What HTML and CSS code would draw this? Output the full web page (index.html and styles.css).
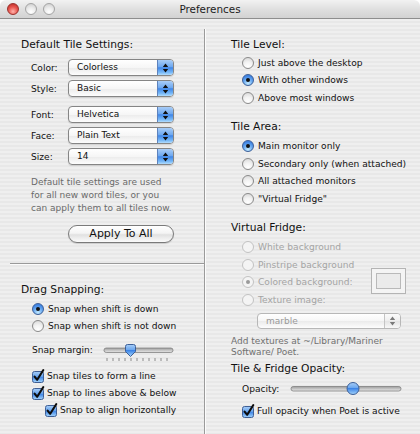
FILE: index.html
```html
<!DOCTYPE html>
<html lang="en">
<head>
    <meta charset="UTF-8">
    <title>Preferences</title>
    <link rel="stylesheet" href="styles.css">
</head>
<body>
    <!-- shared drawings: aqua gradient, check mark, popup arrows -->
    <svg class="sprite" width="0" height="0">
        <defs>
            <linearGradient id="aqua" x1="0" y1="0" x2="0" y2="1">
                <stop offset="0" stop-color="#a7cdf7"/>
                <stop offset="0.45" stop-color="#6aa6ee"/>
                <stop offset="0.5" stop-color="#3d84e6"/>
                <stop offset="1" stop-color="#a6d6fc"/>
            </linearGradient>
            <linearGradient id="track" x1="0" y1="0" x2="0" y2="1">
                <stop offset="0" stop-color="#9d9d9d"/>
                <stop offset="1" stop-color="#e9e9e9"/>
            </linearGradient>
            <symbol id="check" viewBox="0 0 14 14">
                <rect x="1.5" y="2.5" width="11" height="11" rx="2" fill="url(#aqua)" stroke="#3f5f95"/>
                <path d="M3.6 7.6 L6.2 10.8 L12.2 1.2" fill="none" stroke="#0d0d0d" stroke-width="2.1" stroke-linecap="round" stroke-linejoin="round"/>
            </symbol>
            <symbol id="arrows" viewBox="0 0 7 10">
                <path d="M0.8 4 L3.5 0.6 L6.2 4 Z M0.8 6 L3.5 9.4 L6.2 6 Z"/>
            </symbol>
        </defs>
    </svg>

    <div class="window">
        <div class="titlebar">
            <div class="lights">
                <span class="light close"></span>
                <span class="light"></span>
                <span class="light"></span>
            </div>
            <div class="title">Preferences</div>
        </div>

        <div class="content">
            <!-- left column -->
            <div class="col left">
                <h2>Default Tile Settings:</h2>
                <div class="fields">
                    <div class="field"><span class="field-label">Color:</span><div class="popup"><span class="popup-text">Colorless</span><span class="popup-arrows"><svg width="7" height="10"><use href="#arrows"/></svg></span></div></div>
                    <div class="field"><span class="field-label">Style:</span><div class="popup"><span class="popup-text">Basic</span><span class="popup-arrows"><svg width="7" height="10"><use href="#arrows"/></svg></span></div></div>
                    <div class="field sep"><span class="field-label">Font:</span><div class="popup"><span class="popup-text">Helvetica</span><span class="popup-arrows"><svg width="7" height="10"><use href="#arrows"/></svg></span></div></div>
                    <div class="field"><span class="field-label">Face:</span><div class="popup"><span class="popup-text">Plain Text</span><span class="popup-arrows"><svg width="7" height="10"><use href="#arrows"/></svg></span></div></div>
                    <div class="field"><span class="field-label">Size:</span><div class="popup"><span class="popup-text">14</span><span class="popup-arrows"><svg width="7" height="10"><use href="#arrows"/></svg></span></div></div>
                </div>
                <p class="help">Default tile settings are used<br>for all new word tiles, or you<br>can apply them to all tiles now.</p>
                <div class="button">Apply To All</div>

                <hr class="hdivider">

                <h2 class="drag-title">Drag Snapping:</h2>
                <div class="options snap-radios">
                    <div class="option"><span class="radio on"></span>Snap when shift is down</div>
                    <div class="option"><span class="radio"></span>Snap when shift is not down</div>
                </div>
                <div class="slider-row">
                    <span class="slider-label">Snap margin:</span>
                    <svg class="margin-slider" width="72" height="22">
                        <rect x="1" y="6" width="69" height="4.5" rx="2.2" fill="url(#track)" stroke="#808080" stroke-width="0.8"/>
                        <path d="M4 16v3M10 16v3M16 16v3M22 16v3M28 16v3M34 16v3M40 16v3M46 16v3M52 16v3M58 16v3M64 16v3" stroke="#8a8a8a" stroke-width="1"/>
                        <path d="M22.5 4.5 Q22.5 2.5 24.5 2.5 H30.5 Q32.5 2.5 32.5 4.5 V9.5 L27.5 14.5 L22.5 9.5 Z" fill="url(#aqua)" stroke="#3c5f98" stroke-width="1"/>
                    </svg>
                </div>
                <div class="options checks">
                    <div class="option"><svg class="checkbox" width="14" height="14"><use href="#check"/></svg>Snap tiles to form a line</div>
                    <div class="option"><svg class="checkbox" width="14" height="14"><use href="#check"/></svg>Snap to lines above &amp; below</div>
                    <div class="option nested"><svg class="checkbox" width="14" height="14"><use href="#check"/></svg>Snap to align horizontally</div>
                </div>
            </div>

            <div class="vdivider"></div>

            <!-- right column -->
            <div class="col right">
                <h2>Tile Level:</h2>
                <div class="options wide first">
                    <div class="option"><span class="radio"></span>Just above the desktop</div>
                    <div class="option"><span class="radio on"></span>With other windows</div>
                    <div class="option"><span class="radio"></span>Above most windows</div>
                </div>

                <h2 class="section">Tile Area:</h2>
                <div class="options wide">
                    <div class="option"><span class="radio on"></span>Main monitor only</div>
                    <div class="option"><span class="radio"></span>Secondary only (when attached)</div>
                    <div class="option"><span class="radio"></span>All attached monitors</div>
                    <div class="option"><span class="radio"></span>"Virtual Fridge"</div>
                </div>

                <h2 class="section">Virtual Fridge:</h2>
                <div class="options wide disabled">
                    <div class="option"><span class="radio"></span>White background</div>
                    <div class="option"><span class="radio"></span>Pinstripe background</div>
                    <div class="option"><span class="radio on"></span>Colored background:<span class="swatch"><span class="swatch-inner"></span></span></div>
                    <div class="option"><span class="radio"></span>Texture image:</div>
                </div>
                <div class="popup texture-popup disabled"><span class="popup-text">marble</span><span class="popup-arrows"><svg width="7" height="10"><use href="#arrows"/></svg></span></div>
                <p class="help textures">Add textures at ~/Library/Mariner<br>Software/ Poet.</p>

                <h2 class="opacity-title">Tile &amp; Fridge Opacity:</h2>
                <div class="opacity-row">
                    <span class="opacity-label">Opacity:</span>
                    <svg width="112" height="17">
                        <rect x="1" y="6.5" width="110" height="4.5" rx="2.2" fill="url(#track)" stroke="#808080" stroke-width="0.8"/>
                        <circle cx="63" cy="8.5" r="6" fill="url(#aqua)" stroke="#3c5f98" stroke-width="1"/>
                    </svg>
                </div>
                <div class="options opacity-check">
                    <div class="option"><svg class="checkbox" width="14" height="14"><use href="#check"/></svg>Full opacity when Poet is active</div>
                </div>
            </div>
        </div>
    </div>
</body>
</html>
```

FILE: styles.css
```css
body {
    margin: 0;
    background: #fff;
    font-family: "DejaVu Sans", "Liberation Sans", sans-serif;
    color: #111;
}
.sprite {
    display: block;
    width: 0;
    height: 0;
    overflow: hidden;
}
.window {
    width: 420px;
    height: 434px;
    overflow: hidden;
    display: flex;
    flex-direction: column;
}

/* title bar */
.titlebar {
    height: 18px;
    flex: none;
    border-bottom: 1px solid #8e8e8e;
    border-radius: 6px 6px 0 0;
    background: linear-gradient(#f2f2f2, #e0e0e0 50%, #d2d2d2);
    display: grid;
    grid-template-columns: 1fr auto 1fr;
    align-items: center;
}
.lights {
    display: flex;
    gap: 6px;
    padding-left: 7px;
}
.light {
    width: 12px;
    height: 12px;
    box-sizing: border-box;
    border-radius: 50%;
    border: 1px solid #a4a4a4;
    background: radial-gradient(circle at 50% 80%, #ffffff 0, #ececec 45%, #c9c9c9 100%);
}
.light.close {
    border-color: #9a302b;
    background: radial-gradient(circle at 50% 75%, #ffb3ab 0, #e9564f 50%, #b52520 100%);
}
.title {
    font-size: 10.4px;
    color: #1c1c1c;
}

/* body */
.content {
    flex: 1;
    display: flex;
    background: repeating-linear-gradient(#efefef 0 2px, #e8e8e8 2px 4px);
}
.left {
    width: 204px;
    flex: none;
    box-sizing: border-box;
    padding: 18px 0 0 21px;
}
.vdivider {
    width: 2px;
    flex: none;
    margin-top: 10px;
    background: linear-gradient(to right, #9a9a9a 1px, #fcfcfc 1px);
}
.right {
    flex: 1;
    padding: 18px 17px 0 25px;
}
h2 {
    margin: 0;
    font-size: 10.7px;
    font-weight: normal;
    line-height: 16px;
    color: #111;
}

/* popups */
.fields {
    margin-top: 6px;
}
.field {
    display: flex;
    align-items: center;
    height: 17px;
    margin-top: 4px;
}
.field:first-child {
    margin-top: 0;
}
.field.sep {
    margin-top: 9px;
}
.field-label {
    width: 37px;
    margin-left: 10px;
    font-size: 9.1px;
}
.popup {
    width: 106px;
    height: 17px;
    box-sizing: border-box;
    display: flex;
    border: 1px solid #858585;
    border-radius: 4px;
    overflow: hidden;
    background: linear-gradient(#ffffff, #f6f6f6 50%, #ebebeb 52%, #fdfdfd);
    box-shadow: 0 1px 1px rgba(0, 0, 0, 0.12);
}
.popup-text {
    flex: 1;
    padding-left: 8px;
    font-size: 9px;
    line-height: 15px;
}
.popup-arrows {
    width: 15px;
    display: flex;
    align-items: center;
    justify-content: center;
    border-left: 1px solid #5d82bd;
    background: linear-gradient(#a9cdf7, #6ea8ef 45%, #3f86e8 52%, #7cbcf8 85%, #b4ddfd);
    fill: #111;
}
.popup.disabled {
    border-color: #b7b7b7;
    box-shadow: none;
}
.popup.disabled .popup-text {
    color: #9a9a9a;
}
.popup.disabled .popup-arrows {
    border-left-color: #c4c4c4;
    background: linear-gradient(#fbfbfb, #eeeeee 50%, #e4e4e4 52%, #f8f8f8);
    fill: #7a7a7a;
}

.help {
    margin: 11px 0 0 10px;
    font-size: 9px;
    line-height: 13px;
    color: #6a6a6a;
}
.button {
    width: 106px;
    height: 18px;
    box-sizing: border-box;
    margin: 10px 0 0 47px;
    border: 1px solid #7a7a7a;
    border-radius: 9px;
    background: linear-gradient(#ffffff, #f4f4f4 45%, #e1e1e1 55%, #fbfbfb);
    box-shadow: 0 1px 1px rgba(0, 0, 0, 0.15);
    font-size: 11px;
    line-height: 16px;
    text-align: center;
}
.hdivider {
    height: 2px;
    margin: 20px 0 0 -11px;
    border: 0;
    background: linear-gradient(#9a9a9a 1px, #fcfcfc 1px);
}
.drag-title {
    margin-top: 17px;
}

/* radios and checkboxes */
.options {
    padding-left: 11px;
}
.option {
    display: flex;
    align-items: center;
    height: 17px;
    font-size: 9.1px;
    white-space: nowrap;
}
.options.wide .option {
    height: 17.5px;
}
.snap-radios {
    margin-top: 2px;
}
.radio {
    flex: none;
    width: 12px;
    height: 12px;
    box-sizing: border-box;
    margin-right: 4px;
    border-radius: 50%;
    border: 1px solid #8a8a8a;
    background: radial-gradient(circle at 50% 85%, #ffffff 0, #f3f3f3 45%, #d4d4d4 100%);
    display: flex;
    align-items: center;
    justify-content: center;
}
.radio.on {
    border-color: #3c5f98;
    background: radial-gradient(circle at 50% 85%, #c6ecff 0, #6aaaf1 45%, #3a7fe0 80%, #6ea0e6 100%);
}
.radio.on::after {
    content: "";
    width: 4px;
    height: 4px;
    border-radius: 50%;
    background: #111;
}
.disabled .option {
    color: #a4a4a4;
}
.disabled .radio {
    border-color: #c2c2c2;
    background: #f4f4f4;
}
.disabled .radio.on::after {
    background: #9a9a9a;
}
.checkbox {
    flex: none;
    margin: 0 2px 0 -1px;
}
.option.nested {
    margin-left: 13px;
}

/* sliders */
.slider-row {
    display: flex;
    align-items: flex-start;
    margin-top: 8px;
    padding-left: 11px;
}
.slider-label {
    width: 71px;
    flex: none;
    white-space: nowrap;
    font-size: 9.1px;
    line-height: 17px;
}
.margin-slider {
    flex: none;
}
.checks {
    margin-top: 3px;
}

/* right column */
.first {
    margin-top: 1px;
}
.section {
    margin-top: 12px;
}
.section + .options {
    margin-top: 3px;
}
.swatch {
    width: 35px;
    height: 26px;
    box-sizing: border-box;
    margin: 0 0 3px auto;
    padding: 4px;
    border: 1px solid #b4b4b4;
    background: #f4f4f4;
    display: flex;
}
.swatch-inner {
    flex: 1;
    border: 1px solid #b9b9b9;
    background: #ebebeb;
}
.texture-popup {
    width: 144px;
    height: 16px;
    margin: 4px 0 0 26px;
}
.texture-popup .popup-text {
    line-height: 14px;
}
.help.textures {
    margin: 7px 0 0;
    line-height: 11.5px;
    color: #707070;
}
.opacity-title {
    margin-top: 2px;
}
.opacity-row {
    display: flex;
    align-items: center;
    height: 17px;
    margin-top: 3.5px;
    padding-left: 11px;
}
.opacity-label {
    width: 48px;
    font-size: 9.1px;
}
.opacity-check {
    margin-top: 5px;
}
```
